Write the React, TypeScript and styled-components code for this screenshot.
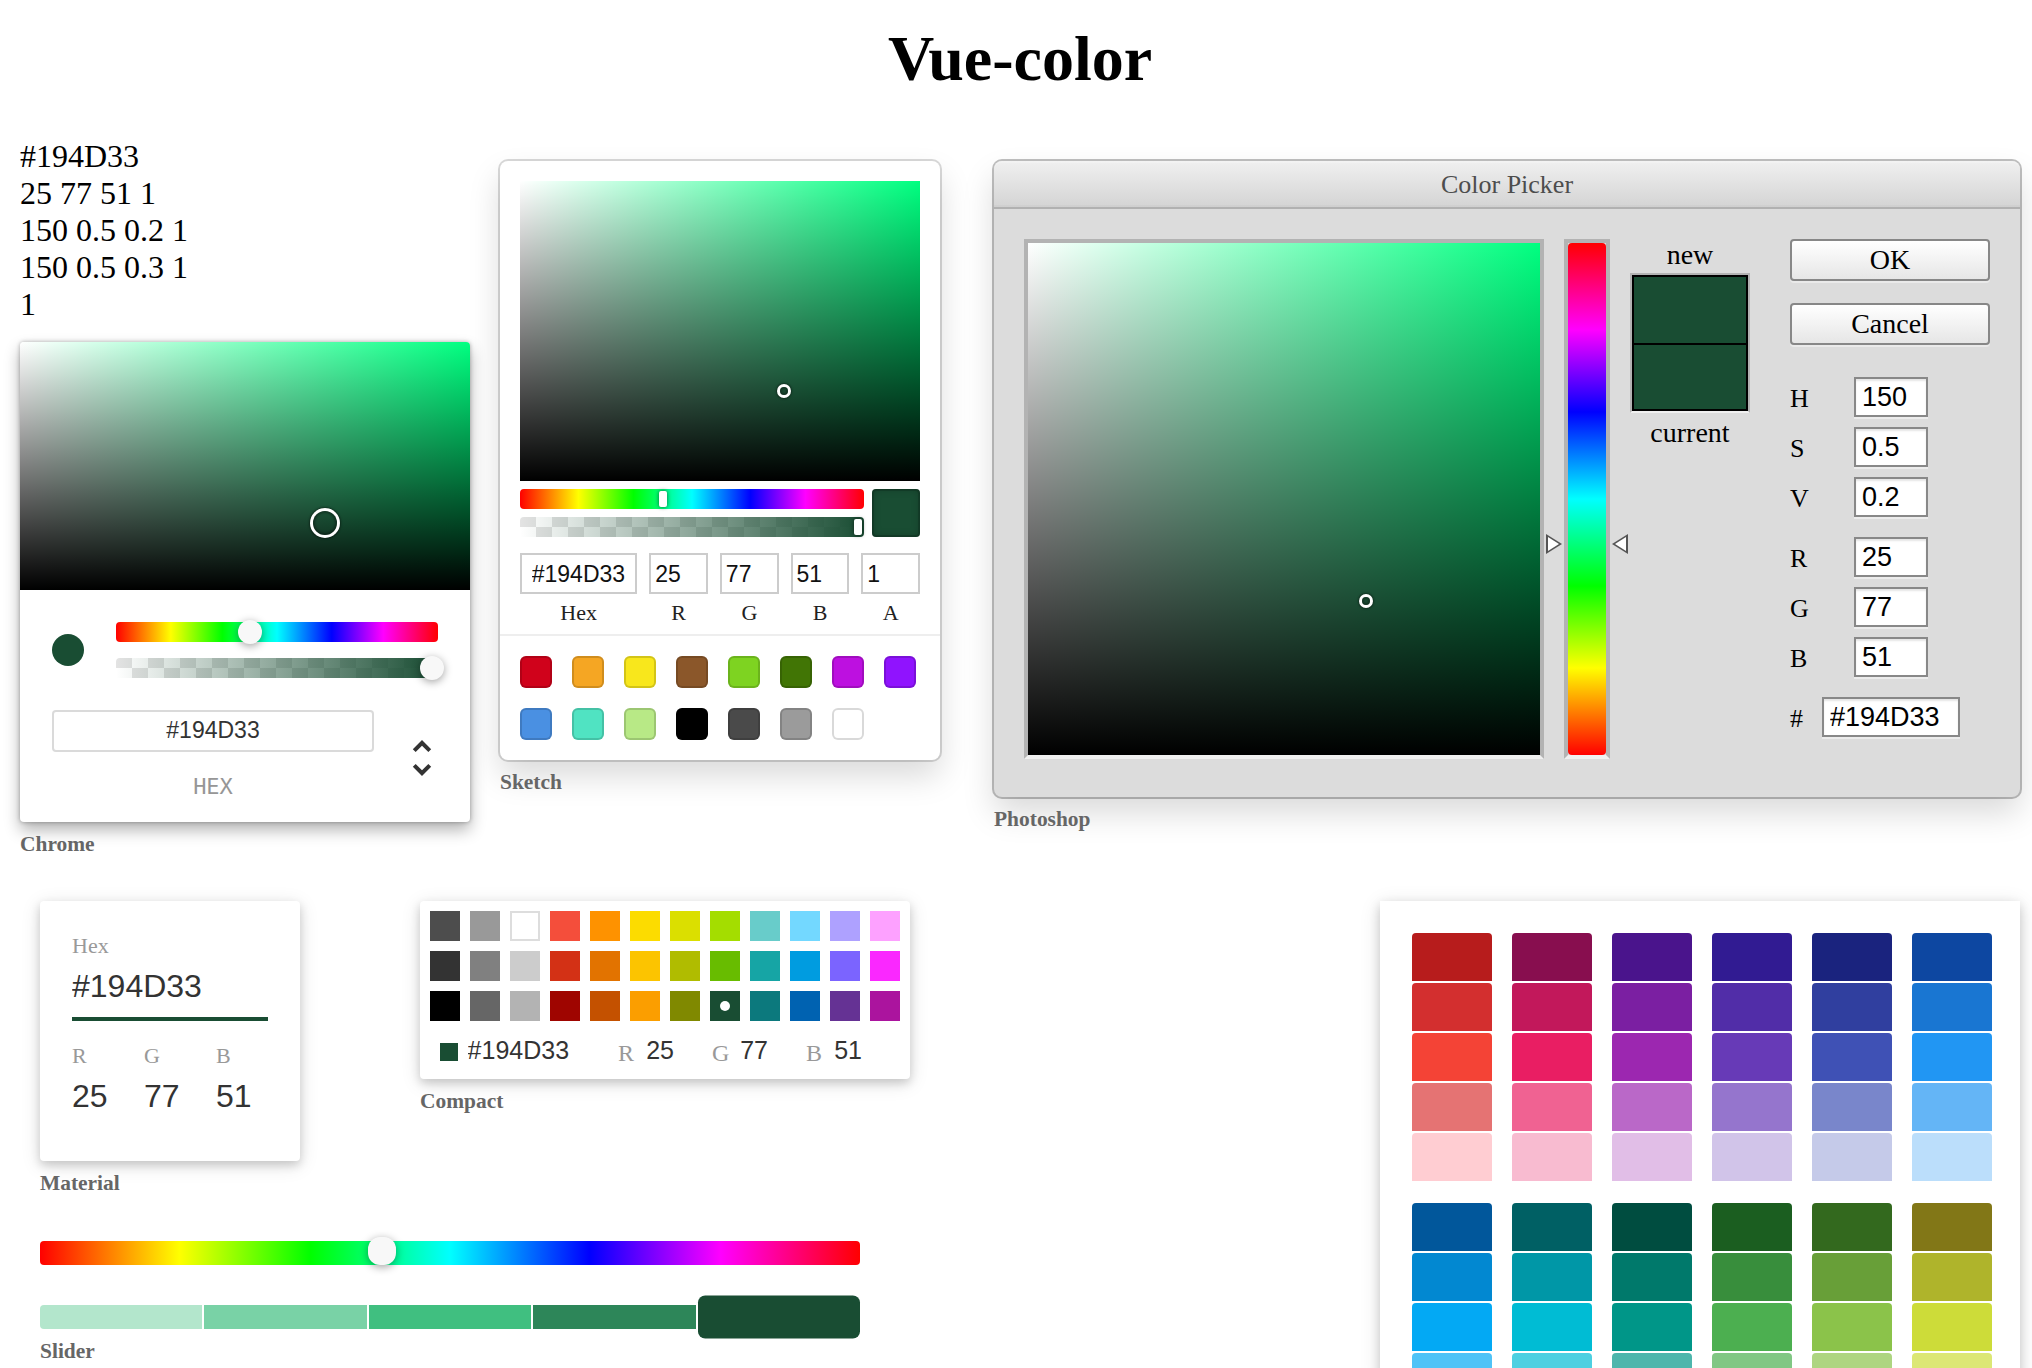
import React from 'react';
import styled, { createGlobalStyle } from 'styled-components';

// Shared colour values for the demo colour #194D33
const PICKED = '#194D33';
const PURE_HUE = '#00ff80';
const HUE_X = 'linear-gradient(to right, #f00 0%, #ff0 17%, #0f0 33%, #0ff 50%, #00f 67%, #f0f 83%, #f00 100%)';
const HUE_Y = 'linear-gradient(to top, #f00 0%, #ff0 17%, #0f0 33%, #0ff 50%, #00f 67%, #f0f 83%, #f00 100%)';
const CHECKER = 'conic-gradient(#fff 0 25%, #e3e3e3 0 50%, #fff 0 75%, #e3e3e3 0)';
const HUE_POS = '41.67%';
const HUE_POS_Y = '58.33%';

const GlobalStyle = createGlobalStyle`
    html, body {
        overflow: hidden;
    }
    body {
        margin: 0;
        background: #fff;
        color: #000;
        font-family: "Liberation Serif", "Times New Roman", serif;
        font-size: 32px;
    }
`;

const Page = styled.div`
    width: 2032px;
    height: 1368px;
`;

const Title = styled.h1`
    margin: 22px 0 0;
    padding-left: 8px;
    font-size: 64px;
    font-weight: bold;
    line-height: normal;
    text-align: center;
`;

// Rows of demo items
const TopRow = styled.div`
    display: flex;
    align-items: flex-start;
    margin-top: 42px;
    padding-left: 20px;
`;

const BottomRow = styled.div`
    display: flex;
    align-items: flex-start;
    margin-top: 44px;
    padding: 0 12px 0 40px;
`;

const Column = styled.div`
    display: flex;
    flex-direction: column;
`;

const PairRow = styled.div`
    display: flex;
    align-items: flex-start;
    gap: 120px;
`;

const Item = styled.div<{ $top?: number; $right?: number; $auto?: boolean }>`
    margin-top: ${(p) => p.$top ?? 0}px;
    margin-right: ${(p) => p.$right ?? 0}px;
    margin-left: ${(p) => (p.$auto ? 'auto' : '0')};
`;

const Label = styled.h6`
    margin: 10px 0 0;
    font-size: 21.44px;
    font-weight: bold;
    line-height: normal;
    color: #666;
`;

const Readout = styled.div`
    line-height: normal;
`;

// Saturation square used by three pickers
const Saturation = styled.div<{ $h: string; $radius?: string }>`
    position: relative;
    width: 100%;
    height: ${(p) => p.$h};
    overflow: hidden;
    border-radius: ${(p) => p.$radius ?? '0'};
    background: linear-gradient(to top, #000, rgba(0, 0, 0, 0)),
        linear-gradient(to right, #fff, rgba(255, 255, 255, 0)), ${PURE_HUE};
`;

const SatCircle = styled.div<{ $size: number }>`
    position: absolute;
    left: 66%;
    top: 70%;
    width: ${(p) => p.$size}px;
    height: ${(p) => p.$size}px;
    border-radius: 50%;
    transform: translate(-4px, -4px);
    box-shadow: 0 0 0 3px #fff, inset 0 0 2px 2px rgba(0, 0, 0, 0.3), 0 0 2px 4px rgba(0, 0, 0, 0.4);
`;

const HueTrack = styled.div<{ $h: number }>`
    position: relative;
    height: ${(p) => p.$h}px;
    border-radius: 4px;
    background: ${HUE_X};
`;

const AlphaTrack = styled.div<{ $top: number }>`
    position: relative;
    height: 20px;
    margin-top: ${(p) => p.$top}px;
    border-radius: 4px;
    background: linear-gradient(to right, rgba(25, 77, 51, 0), rgba(25, 77, 51, 1)), ${CHECKER};
    background-size: 100% 100%, 32px 20px;
`;

const RoundThumb = styled.div<{ $left: string; $shift: number }>`
    position: absolute;
    top: 0;
    left: ${(p) => p.$left};
    width: 24px;
    height: 24px;
    border-radius: 12px;
    transform: translate(${(p) => p.$shift}px, -2px);
    background: rgb(248, 248, 248);
    box-shadow: 0 2px 8px 0 rgba(0, 0, 0, 0.37);
`;

/* ---------- Chrome ---------- */
const ChromeBox = styled.div`
    width: 450px;
    margin-top: 19px;
    background: #fff;
    border-radius: 4px;
    box-shadow: 0 0 4px rgba(0, 0, 0, 0.3), 0 8px 16px rgba(0, 0, 0, 0.3);
`;

const ChromeBody = styled.div`
    padding: 32px 32px 24px;
`;

const ChromeControls = styled.div`
    display: flex;
`;

const ChromeColorWrap = styled.div`
    width: 64px;
`;

const ActiveDot = styled.div`
    width: 32px;
    height: 32px;
    margin-top: 12px;
    border-radius: 16px;
    background: ${PICKED};
`;

const ChromeSliders = styled.div`
    flex: 1;
`;

const ChromeFieldsWrap = styled.div`
    display: flex;
    padding-top: 32px;
`;

const ChromeField = styled.div`
    flex: 1;
    text-align: center;
`;

const ChromeInput = styled.input`
    display: block;
    box-sizing: border-box;
    width: 100%;
    height: 42px;
    padding: 0;
    border: none;
    border-radius: 4px;
    box-shadow: inset 0 0 0 2px #dadada;
    outline: none;
    text-align: center;
    font-family: "Liberation Sans", Arial, sans-serif;
    font-size: 23px;
    color: #333;
`;

const ChromeFieldLabel = styled.span`
    display: block;
    margin-top: 24px;
    font-family: "DejaVu Sans Mono", monospace;
    font-size: 22px;
    line-height: 22px;
    text-transform: uppercase;
    color: #969696;
`;

const ToggleBtn = styled.div`
    width: 64px;
    text-align: right;

    svg {
        width: 48px;
        height: 48px;
        margin-right: -8px;
        margin-top: 24px;
    }
`;

/* ---------- Sketch ---------- */
const SketchBox = styled.div`
    width: 400px;
    padding: 20px 20px 0;
    background: #fff;
    border-radius: 8px;
    box-shadow: 0 0 0 2px rgba(0, 0, 0, 0.15), 0 16px 32px rgba(0, 0, 0, 0.15);
`;

const SketchControls = styled.div`
    display: flex;
`;

const SketchSliders = styled.div`
    flex: 1;
    padding: 8px 0;
`;

const BarPointer = styled.div<{ $left: string; $shift: number }>`
    position: absolute;
    top: 2px;
    left: ${(p) => p.$left};
    width: 8px;
    height: 16px;
    border-radius: 2px;
    background: #fff;
    box-shadow: 0 0 4px rgba(0, 0, 0, 0.6);
    transform: translateX(${(p) => p.$shift}px);
`;

const SketchColor = styled.div`
    width: 48px;
    height: 48px;
    margin: 8px 0 0 8px;
    border-radius: 4px;
    background: ${PICKED};
    box-shadow: inset 0 0 0 2px rgba(0, 0, 0, 0.15), inset 0 0 8px rgba(0, 0, 0, 0.25);
`;

const SketchFields = styled.div`
    display: flex;
    padding-top: 8px;
`;

const SketchField = styled.div<{ $double?: boolean }>`
    flex: ${(p) => (p.$double ? 2 : 1)};
    min-width: 0;
    padding-left: ${(p) => (p.$double ? 0 : 12)}px;
`;

const SketchInput = styled.input`
    display: block;
    box-sizing: content-box;
    width: 90%;
    padding: 8px 0 6px 10%;
    border: none;
    box-shadow: inset 0 0 0 2px #ccc;
    outline: none;
    font-family: "Liberation Sans", Arial, sans-serif;
    font-size: 23px;
    line-height: normal;
    color: #111;
`;

const SketchFieldLabel = styled.span`
    display: block;
    padding: 6px 0 8px;
    text-align: center;
    font-size: 22px;
    line-height: normal;
    color: #222;
`;

const Presets = styled.div`
    margin: 0 -20px;
    padding: 20px 0 0 20px;
    border-top: 2px solid #eee;
`;

const Preset = styled.div<{ $color: string }>`
    display: inline-block;
    vertical-align: top;
    width: 32px;
    height: 32px;
    margin: 0 20px 20px 0;
    border-radius: 6px;
    background: ${(p) => p.$color};
    box-shadow: inset 0 0 0 2px rgba(0, 0, 0, 0.15);
`;

/* ---------- Photoshop ---------- */
const PsBox = styled.div`
    width: 1026px;
    background: #dcdcdc;
    border-radius: 8px;
    box-shadow: 0 0 0 2px rgba(0, 0, 0, 0.25), 0 16px 32px rgba(0, 0, 0, 0.15);
`;

const PsHead = styled.div`
    height: 46px;
    line-height: 48px;
    border-bottom: 2px solid #b1b1b1;
    border-radius: 8px 8px 0 0;
    background: linear-gradient(-180deg, #f0f0f0 0%, #d4d4d4 100%);
    box-shadow: inset 0 2px 0 0 rgba(255, 255, 255, 0.2), inset 0 -2px 0 0 rgba(0, 0, 0, 0.02);
    text-align: center;
    font-size: 26px;
    color: #4d4d4d;
`;

const PsBody = styled.div`
    display: flex;
    padding: 30px;
`;

const PsFrame = styled.div<{ $w: number; $gap?: number }>`
    position: relative;
    flex: none;
    width: ${(p) => p.$w}px;
    height: 512px;
    margin-left: ${(p) => p.$gap ?? 0}px;
    border: 4px solid #b3b3b3;
    border-bottom-color: #f0f0f0;
`;

const PsHue = styled.div`
    height: 100%;
    border-radius: 4px;
    background: ${HUE_Y};
`;

const PsArrow = styled.div<{ $side: 'left' | 'right' }>`
    position: absolute;
    top: ${HUE_POS_Y};
    left: ${(p) => (p.$side === 'left' ? -22 : 44)}px;
    width: 0;
    height: 0;
    border-style: solid;
    border-width: 10px 0 10px 16px;
    border-color: transparent transparent transparent #555;
    transform: translateY(-8px) ${(p) => (p.$side === 'right' ? 'rotate(180deg)' : '')};

    &::after {
        content: "";
        position: absolute;
        top: -7px;
        left: -14px;
        border-style: solid;
        border-width: 7px 0 7px 11px;
        border-color: transparent transparent transparent #fff;
    }
`;

const PsControls = styled.div`
    display: flex;
    width: 360px;
    margin-left: 20px;
`;

const PsPreviews = styled.div`
    width: 120px;
`;

const PsPreviewLabel = styled.div`
    text-align: center;
    font-size: 28px;
    line-height: normal;
`;

const PsSwatches = styled.div`
    margin: 2px 0 4px;
    border: 2px solid #b3b3b3;
    border-bottom-color: #f0f0f0;
`;

const PsSwatch = styled.div<{ $bottom?: boolean }>`
    height: 68px;
    background: ${PICKED};
    box-shadow: inset 2px 0 0 #000, inset -2px 0 0 #000, inset 0 2px 0 #000
        ${(p) => (p.$bottom ? ', inset 0 -2px 0 #000' : '')};
`;

const PsActions = styled.div`
    flex: 1;
    margin-left: 40px;
`;

const PsButton = styled.div`
    height: 38px;
    margin-bottom: 22px;
    border: 2px solid #878787;
    border-radius: 4px;
    background: linear-gradient(-180deg, #fff 0%, #e6e6e6 100%);
    box-shadow: 0 2px 0 0 #eaeaea;
    text-align: center;
    font-size: 28px;
    line-height: 38px;
`;

const PsFields = styled.div`
    width: 160px;
    padding: 10px 0 18px;
`;

const PsField = styled.div`
    position: relative;
`;

const PsInput = styled.input<{ $hex?: boolean }>`
    display: block;
    box-sizing: content-box;
    width: ${(p) => (p.$hex ? '80%' : '40%')};
    height: 36px;
    margin: 0 0 ${(p) => (p.$hex ? 12 : 10)}px ${(p) => (p.$hex ? '20%' : '40%')};
    padding: 0 0 0 6px;
    border: 2px solid #888;
    box-shadow: inset 0 2px 2px rgba(0, 0, 0, 0.1), 0 2px 0 0 #ececec;
    outline: none;
    font-family: "Liberation Sans", Arial, sans-serif;
    font-size: 27px;
    color: #000;
`;

const PsFieldLabel = styled.span`
    position: absolute;
    top: 0;
    left: 0;
    height: 36px;
    font-size: 26px;
    line-height: 44px;
    text-transform: uppercase;
`;

const PsDivider = styled.div`
    height: 10px;
`;

/* ---------- Material ---------- */
const MaterialBox = styled.div`
    width: 196px;
    height: 196px;
    padding: 32px;
    background: #fff;
    border-radius: 4px;
    box-shadow: 0 4px 20px rgba(0, 0, 0, 0.12), 0 4px 10px rgba(0, 0, 0, 0.16);
`;

const MField = styled.div`
    position: relative;
    padding-top: 24px;
`;

const MLabel = styled.span`
    position: absolute;
    top: 0;
    left: 0;
    font-size: 22px;
    line-height: normal;
    color: #999;
`;

const MInput = styled.input<{ $underline?: boolean }>`
    display: block;
    box-sizing: content-box;
    width: 100%;
    height: 60px;
    margin: 0;
    padding: 0;
    border: none;
    border-bottom: ${(p) => (p.$underline ? `4px solid ${PICKED}` : 'none')};
    outline: none;
    background: transparent;
    font-family: "Liberation Sans", Arial, sans-serif;
    font-size: 32px;
    color: #333;
`;

const MSplit = styled.div`
    display: flex;
    margin-right: -20px;
    padding-top: 22px;
`;

const MThird = styled.div`
    flex: 1;
    min-width: 0;
    padding-right: 20px;
`;

/* ---------- Compact ---------- */
const CompactBox = styled.div`
    width: 480px;
    padding: 10px 0 0 10px;
    background: #fff;
    border-radius: 4px;
    box-shadow: 0 4px 20px rgba(0, 0, 0, 0.12), 0 4px 10px rgba(0, 0, 0, 0.16);
`;

const CompactGrid = styled.div`
    display: grid;
    grid-template-columns: repeat(12, 30px);
    gap: 10px;
    padding-bottom: 10px;
`;

const CompactCell = styled.div<{ $color: string; $white?: boolean }>`
    position: relative;
    height: 30px;
    background: ${(p) => p.$color};
    box-shadow: ${(p) => (p.$white ? 'inset 0 0 0 2px #ddd' : 'none')};
`;

const CompactDot = styled.div`
    position: absolute;
    inset: 10px;
    border-radius: 50%;
    background: #fff;
`;

const CompactFields = styled.div`
    position: relative;
    display: flex;
    padding: 0 10px 12px 0;
`;

const CompactActive = styled.div`
    position: absolute;
    top: 12px;
    left: 10px;
    width: 18px;
    height: 18px;
    background: ${PICKED};
`;

const CompactWrap = styled.div<{ $flex: number }>`
    position: relative;
    flex: ${(p) => p.$flex};
    min-width: 0;
    padding-top: 4px;
`;

const CompactInput = styled.input<{ $pad: number }>`
    display: block;
    box-sizing: content-box;
    width: ${(p) => 100 - p.$pad}%;
    height: 32px;
    margin: 0;
    padding: 0 0 0 ${(p) => p.$pad}%;
    border: none;
    outline: none;
    background: none;
    font-family: "Liberation Sans", Arial, sans-serif;
    font-size: 25px;
    color: #333;
`;

const CompactLabel = styled.span`
    position: absolute;
    top: 6px;
    left: 0;
    font-size: 24px;
    line-height: 32px;
    text-transform: uppercase;
    color: #999;
`;

/* ---------- Slider ---------- */
const SliderBox = styled.div`
    width: 820px;
    margin-top: 45px;
`;

const SliderThumb = styled.div`
    position: absolute;
    top: 0;
    left: ${HUE_POS};
    width: 28px;
    height: 28px;
    border-radius: 12px;
    transform: translate(-14px, -4px);
    background: rgb(248, 248, 248);
    box-shadow: 0 2px 8px 0 rgba(0, 0, 0, 0.37);
`;

const SliderSwatches = styled.div`
    display: flex;
    gap: 2px;
    margin-top: 40px;
`;

const SliderSwatch = styled.div<{ $color: string; $active?: boolean; $first?: boolean; $last?: boolean }>`
    flex: 1;
    height: 24px;
    background: ${(p) => p.$color};
    border-radius: ${(p) => (p.$active ? '7.2px / 4px' : p.$first ? '4px 0 0 4px' : p.$last ? '0 4px 4px 0' : '0')};
    transform: ${(p) => (p.$active ? 'scaleY(1.8)' : 'none')};
`;

/* ---------- Swatches ---------- */
const SwatchesBox = styled.div`
    width: 640px;
    height: 480px;
    overflow: hidden;
    background: #fff;
    box-shadow: 0 4px 20px rgba(0, 0, 0, 0.12), 0 4px 10px rgba(0, 0, 0, 0.16);
`;

const SwatchesInner = styled.div`
    display: flex;
    flex-wrap: wrap;
    padding: 32px 0 12px 32px;
`;

const SwatchGroup = styled.div`
    width: 80px;
    margin-right: 20px;
    padding-bottom: 20px;
`;

const SwatchCell = styled.div<{ $color: string }>`
    height: 48px;
    margin-bottom: 2px;
    border-radius: 4px 4px 0 0;
    background: ${(p) => p.$color};
`;

const sketchPresets = [
    '#D0021B', '#F5A623', '#F8E71C', '#8B572A', '#7ED321', '#417505', '#BD10E0', '#9013FE',
    '#4A90E2', '#50E3C2', '#B8E986', '#000000', '#4A4A4A', '#9B9B9B', '#FFFFFF',
];

const compactPalette = [
    '#4D4D4D', '#999999', '#FFFFFF', '#F44E3B', '#FE9200', '#FCDC00', '#DBDF00', '#A4DD00', '#68CCCA', '#73D8FF', '#AEA1FF', '#FDA1FF',
    '#333333', '#808080', '#CCCCCC', '#D33115', '#E27300', '#FCC400', '#B0BC00', '#68BC00', '#16A5A5', '#009CE0', '#7B64FF', '#FA28FF',
    '#000000', '#666666', '#B3B3B3', '#9F0500', '#C45100', '#FB9E00', '#808900', '#194D33', '#0C797D', '#0062B1', '#653294', '#AB149E',
];

const sliderShades = ['#b3e6cc', '#79d2a6', '#40bf80', '#2d8659', '#194d33'];

const materialGroups = [
    ['#B71C1C', '#D32F2F', '#F44336', '#E57373', '#FFCDD2'],
    ['#880E4F', '#C2185B', '#E91E63', '#F06292', '#F8BBD0'],
    ['#4A148C', '#7B1FA2', '#9C27B0', '#BA68C8', '#E1BEE7'],
    ['#311B92', '#512DA8', '#673AB7', '#9575CD', '#D1C4E9'],
    ['#1A237E', '#303F9F', '#3F51B5', '#7986CB', '#C5CAE9'],
    ['#0D47A1', '#1976D2', '#2196F3', '#64B5F6', '#BBDEFB'],
    ['#01579B', '#0288D1', '#03A9F4', '#4FC3F7', '#B3E5FC'],
    ['#006064', '#0097A7', '#00BCD4', '#4DD0E1', '#B2EBF2'],
    ['#004D40', '#00796B', '#009688', '#4DB6AC', '#B2DFDB'],
    ['#1B5E20', '#388E3C', '#4CAF50', '#81C784', '#C8E6C9'],
    ['#33691E', '#689F38', '#8BC34A', '#AED581', '#DCEDC8'],
    ['#827717', '#AFB42B', '#CDDC39', '#DCE775', '#F0F4C3'],
];

function Chrome() {
    return (
        <ChromeBox>
            <Saturation $h="247.5px" $radius="4px 4px 0 0">
                <SatCircle $size={24} />
            </Saturation>
            <ChromeBody>
                <ChromeControls>
                    <ChromeColorWrap>
                        <ActiveDot />
                    </ChromeColorWrap>
                    <ChromeSliders>
                        <HueTrack $h={20}>
                            <RoundThumb $left={HUE_POS} $shift={-12} />
                        </HueTrack>
                        <AlphaTrack $top={16}>
                            <RoundThumb $left="100%" $shift={-18} />
                        </AlphaTrack>
                    </ChromeSliders>
                </ChromeControls>
                <ChromeFieldsWrap>
                    <ChromeField>
                        <ChromeInput readOnly value="#194D33" />
                        <ChromeFieldLabel>hex</ChromeFieldLabel>
                    </ChromeField>
                    <ToggleBtn>
                        <svg viewBox="0 0 24 24">
                            <path fill="#333" d="M12,18.17L8.83,15L7.41,16.41L12,21L16.59,16.41L15.17,15M12,5.83L15.17,9L16.59,7.58L12,3L7.41,7.58L8.83,9L12,5.83Z" />
                        </svg>
                    </ToggleBtn>
                </ChromeFieldsWrap>
            </ChromeBody>
        </ChromeBox>
    );
}

function Sketch() {
    const fields = [
        { label: 'hex', value: '#194D33', double: true },
        { label: 'r', value: '25' },
        { label: 'g', value: '77' },
        { label: 'b', value: '51' },
        { label: 'a', value: '1' },
    ];
    return (
        <SketchBox>
            <Saturation $h="300px">
                <SatCircle $size={8} />
            </Saturation>
            <SketchControls>
                <SketchSliders>
                    <HueTrack $h={20}>
                        <BarPointer $left={HUE_POS} $shift={-4} />
                    </HueTrack>
                    <AlphaTrack $top={8}>
                        <BarPointer $left="100%" $shift={-10} />
                    </AlphaTrack>
                </SketchSliders>
                <SketchColor />
            </SketchControls>
            <SketchFields>
                {fields.map((f) => (
                    <SketchField key={f.label} $double={f.double}>
                        <SketchInput readOnly value={f.value} />
                        <SketchFieldLabel>{f.label === 'hex' ? 'Hex' : f.label.toUpperCase()}</SketchFieldLabel>
                    </SketchField>
                ))}
            </SketchFields>
            <Presets>
                {sketchPresets.map((c) => (
                    <Preset key={c} $color={c} />
                ))}
            </Presets>
        </SketchBox>
    );
}

function Photoshop() {
    const hsv = [['h', '150'], ['s', '0.5'], ['v', '0.2']];
    const rgb = [['r', '25'], ['g', '77'], ['b', '51']];
    return (
        <PsBox>
            <PsHead>Color Picker</PsHead>
            <PsBody>
                <PsFrame $w={512}>
                    <Saturation $h="100%">
                        <SatCircle $size={8} />
                    </Saturation>
                </PsFrame>
                <PsFrame $w={38} $gap={20}>
                    <PsHue />
                    <PsArrow $side="left" />
                    <PsArrow $side="right" />
                </PsFrame>
                <PsControls>
                    <PsPreviews>
                        <PsPreviewLabel>new</PsPreviewLabel>
                        <PsSwatches>
                            <PsSwatch />
                            <PsSwatch $bottom />
                        </PsSwatches>
                        <PsPreviewLabel>current</PsPreviewLabel>
                    </PsPreviews>
                    <PsActions>
                        <PsButton>OK</PsButton>
                        <PsButton>Cancel</PsButton>
                        <PsFields>
                            {hsv.map(([l, v]) => (
                                <PsField key={l}>
                                    <PsFieldLabel>{l}</PsFieldLabel>
                                    <PsInput readOnly value={v} />
                                </PsField>
                            ))}
                            <PsDivider />
                            {rgb.map(([l, v]) => (
                                <PsField key={l}>
                                    <PsFieldLabel>{l}</PsFieldLabel>
                                    <PsInput readOnly value={v} />
                                </PsField>
                            ))}
                            <PsDivider />
                            <PsField>
                                <PsFieldLabel>#</PsFieldLabel>
                                <PsInput $hex readOnly value="#194D33" />
                            </PsField>
                        </PsFields>
                    </PsActions>
                </PsControls>
            </PsBody>
        </PsBox>
    );
}

function Material() {
    return (
        <MaterialBox>
            <MField>
                <MLabel>Hex</MLabel>
                <MInput $underline readOnly value="#194D33" />
            </MField>
            <MSplit>
                {[['R', '25'], ['G', '77'], ['B', '51']].map(([l, v]) => (
                    <MThird key={l}>
                        <MField>
                            <MLabel>{l}</MLabel>
                            <MInput readOnly value={v} />
                        </MField>
                    </MThird>
                ))}
            </MSplit>
        </MaterialBox>
    );
}

function Compact() {
    return (
        <CompactBox>
            <CompactGrid>
                {compactPalette.map((c) => (
                    <CompactCell key={c} $color={c} $white={c === '#FFFFFF'}>
                        {c === PICKED && <CompactDot />}
                    </CompactCell>
                ))}
            </CompactGrid>
            <CompactFields>
                <CompactActive />
                <CompactWrap $flex={6}>
                    <CompactInput $pad={20} readOnly value="#194D33" />
                </CompactWrap>
                {[['r', '25'], ['g', '77'], ['b', '51']].map(([l, v]) => (
                    <CompactWrap key={l} $flex={3}>
                        <CompactInput $pad={30} readOnly value={v} />
                        <CompactLabel>{l}</CompactLabel>
                    </CompactWrap>
                ))}
            </CompactFields>
        </CompactBox>
    );
}

function Slider() {
    return (
        <SliderBox>
            <HueTrack $h={24}>
                <SliderThumb />
            </HueTrack>
            <SliderSwatches>
                {sliderShades.map((c, i) => (
                    <SliderSwatch
                        key={c}
                        $color={c}
                        $first={i === 0}
                        $last={i === sliderShades.length - 1}
                        $active={i === sliderShades.length - 1}
                    />
                ))}
            </SliderSwatches>
            <Label>Slider</Label>
        </SliderBox>
    );
}

function Swatches() {
    return (
        <SwatchesBox>
            <SwatchesInner>
                {materialGroups.map((group) => (
                    <SwatchGroup key={group[0]}>
                        {group.map((c) => (
                            <SwatchCell key={c} $color={c} />
                        ))}
                    </SwatchGroup>
                ))}
            </SwatchesInner>
        </SwatchesBox>
    );
}

export default function App() {
    return (
        <>
            <GlobalStyle />
            <Page>
                <Title>Vue-color</Title>

                {/* First row: readout + chrome, sketch, photoshop */}
                <TopRow>
                    <Item $right={30}>
                        <Readout>
                            <div>#194D33</div>
                            <div>25 77 51 1</div>
                            <div>150 0.5 0.2 1</div>
                            <div>150 0.5 0.3 1</div>
                            <div>1</div>
                        </Readout>
                        <Chrome />
                        <Label>Chrome</Label>
                    </Item>
                    <Item $top={23} $right={54}>
                        <Sketch />
                        <Label>Sketch</Label>
                    </Item>
                    <Item $top={23}>
                        <Photoshop />
                        <Label>Photoshop</Label>
                    </Item>
                </TopRow>

                {/* Second row: material, compact, slider and swatches */}
                <BottomRow>
                    <Column>
                        <PairRow>
                            <div>
                                <Material />
                                <Label>Material</Label>
                            </div>
                            <div>
                                <Compact />
                                <Label>Compact</Label>
                            </div>
                        </PairRow>
                        <Slider />
                    </Column>
                    <Item $auto>
                        <Swatches />
                    </Item>
                </BottomRow>
            </Page>
        </>
    );
}
